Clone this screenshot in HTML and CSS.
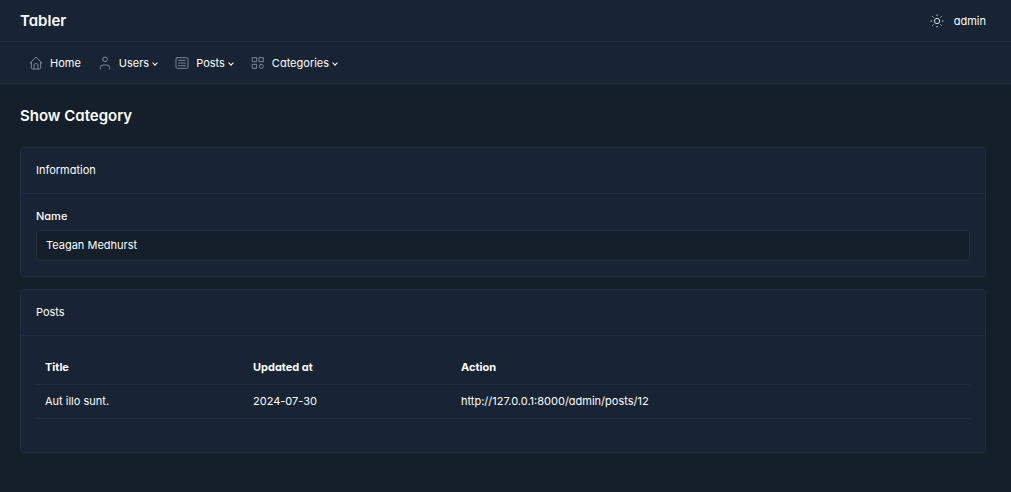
FILE: index.html
```html
<!DOCTYPE html>
<html lang="en">
<head>
<meta charset="utf-8">
<title>Show Category</title>
<link rel="stylesheet" href="styles.css">
</head>
<body>
<header class="bar topbar">
  <a class="brand" href="#">Tabler</a>
  <div class="account">
    <button class="theme" type="button" aria-label="Light mode">
      <svg class="icon sun" viewBox="0 0 24 24"><path d="M12 12m-4 0a4 4 0 1 0 8 0a4 4 0 1 0 -8 0M3 12h1m8 -9v1m8 8h1m-9 8v1m-6.400 -15.400l.7 .7m12.100 -.7l-.7 .7m0 11.400l.7 .7m-12.100 -.7l-.7 .7"/></svg>
    </button>
    <a href="#">admin</a>
  </div>
</header>
<nav class="bar menu">
  <a class="item" href="#">
    <svg class="icon" viewBox="0 0 24 24"><path d="M5 12H3l9-9 9 9h-2M5 12v7a2 2 0 0 0 2 2h10a2 2 0 0 0 2-2v-7M9 21v-6a2 2 0 0 1 2-2h2a2 2 0 0 1 2 2v6"/></svg>
    <span>Home</span>
  </a>
  <button class="item" type="button">
    <svg class="icon" viewBox="0 0 24 24"><path d="M8.500 6.500a3.500 3.500 0 1 0 7 0a3.500 3.500 0 0 0 -7 0M5 21v-2a4 4 0 0 1 4 -4h6a4 4 0 0 1 4 4v2"/></svg>
    <span class="caret">Users</span>
  </button>
  <button class="item" type="button">
    <svg class="icon" viewBox="0 0 24 24"><path d="M5 4h14a2 2 0 0 1 2 2v12a2 2 0 0 1-2 2H5a2 2 0 0 1-2-2V6a2 2 0 0 1 2-2zM7 8h10M7 12h10M7 16h10"/></svg>
    <span class="caret">Posts</span>
  </button>
  <button class="item" type="button">
    <svg class="icon" viewBox="0 0 24 24"><path d="M4 4h6v6H4zM14 4h6v6h-6zM4 14h6v6H4zM17 14a3 3 0 1 0 0 6a3 3 0 1 0 0-6"/></svg>
    <span class="caret">Categories</span>
  </button>
</nav>
<main class="page">
  <h1 class="title">Show Category</h1>
  <section class="card">
    <h2 class="card-header">Information</h2>
    <div class="card-body">
      <label class="label" for="name">Name</label>
      <input class="input" id="name" type="text" value="Teagan Medhurst" readonly>
    </div>
  </section>
  <section class="card">
    <h2 class="card-header">Posts</h2>
    <div class="card-body posts">
      <table class="table">
        <thead><tr><th class="col">Title</th><th class="col">Updated at</th><th>Action</th></tr></thead>
        <tbody><tr><td>Aut illo sunt.</td><td>2024-07-30</td><td>http://127.0.0.1:8000/admin/posts/12</td></tr></tbody>
      </table>
    </div>
  </section>
</main>
</body>
</html>
```

FILE: styles.css
```css
* { box-sizing: border-box; }

body {
  margin: 0;
  min-height: 100vh;
  background: #151f2a;
  color: #fcfdfe;
  font-family: Inter, "Liberation Sans", sans-serif;
  font-size: 11px;
  line-height: 16px;
  font-feature-settings: "cv03", "cv04", "cv11";
}

a { color: inherit; text-decoration: none; }

button, input {
  font: inherit;
  color: inherit;
}

button {
  padding: 0;
  border: 0;
  background: none;
  font-feature-settings: inherit;
}

.bar {
  display: flex;
  align-items: center;
  height: 42px;
  background: #182433;
  border-bottom: 1px solid #1f2e41;
}

.topbar { justify-content: space-between; padding: 1px 25px 0 20px; }

.brand { font-size: 15px; font-weight: 600; }

.account { display: flex; align-items: center; gap: 9px; }

.theme { display: flex; }

.icon {
  width: 16px;
  height: 16px;
  fill: none;
  stroke: #7b8797;
  stroke-width: 1.5;
  stroke-linecap: round;
  stroke-linejoin: round;
}

.sun { stroke: #d5dae0; }

.menu { gap: 16px; padding: 1px 28px 0; }

.item { display: flex; align-items: center; gap: 6px; }

.caret::after {
  content: "";
  box-sizing: border-box;
  display: inline-block;
  width: 4px;
  height: 4px;
  margin: 0 1px 2px 4px;
  border: solid;
  border-width: 0 1px 1px 0;
  transform: rotate(45deg);
}

.page { padding: 20px 25px 20px 20px; }

.title { margin: 0 0 19px; font-size: 15px; line-height: 24px; font-weight: 600; }

.card {
  margin-bottom: 12px;
  background: #182433;
  border: 1px solid #1f2e41;
  border-radius: 3px;
}

.card-header {
  margin: 0;
  padding: 14px 15px 15px;
  border-bottom: 1px solid #1f2e41;
  font-size: 11px;
  font-weight: 400;
}

.card-body { padding: 14px 15px 15px; }

.label { display: block; margin-bottom: 6px; font-weight: 500; }

.input {
  display: block;
  width: 100%;
  height: 31px;
  padding: 0 9px 1px;
  background: #151f2a;
  border: 1px solid #1f2e41;
  border-radius: 3px;
  font-feature-settings: normal;
}

.posts { padding: 15px 15px 33px; }

.table { width: 100%; border-collapse: collapse; table-layout: fixed; }

.table th, .table td {
  padding: 8px 9px 9px;
  border-bottom: 1px solid #1f2e41;
  text-align: left;
}

.table th { font-weight: 700; }

.col { width: 208px; }
```
